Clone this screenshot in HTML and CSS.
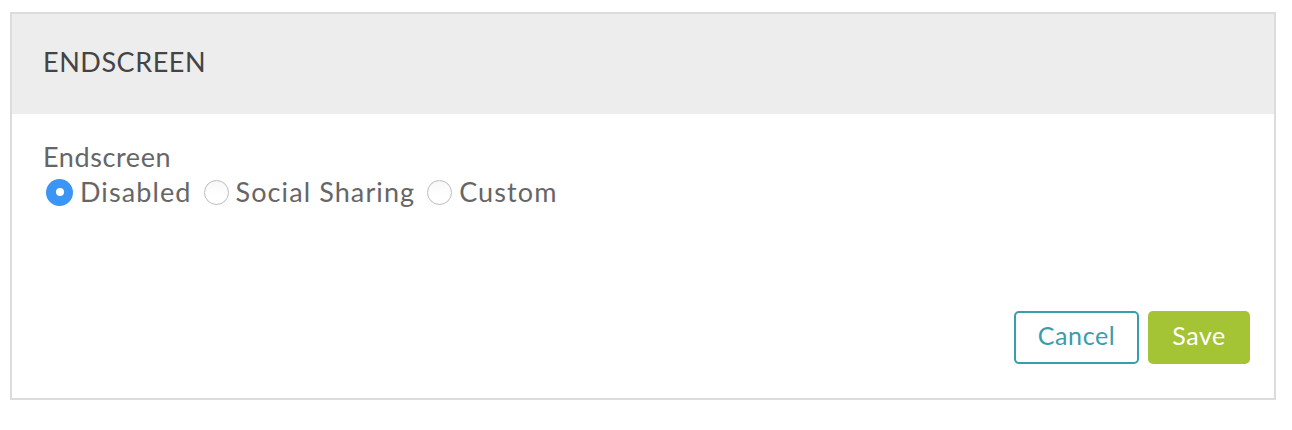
FILE: index.html
```html
<!DOCTYPE html>
<html>
<head>
<meta charset="utf-8">
<link rel="stylesheet" href="styles.css">
</head>
<body>
<div class="panel">
  <div class="panel-header">
    <h2 class="panel-title">ENDSCREEN</h2>
  </div>
  <div class="panel-body">
    <div class="field">
      <div class="field-label">Endscreen</div>
      <div class="radio-group">
        <label class="radio"><span class="radio-dot checked"></span><span class="radio-text">Disabled</span></label>
        <label class="radio"><span class="radio-dot"></span><span class="radio-text">Social Sharing</span></label>
        <label class="radio"><span class="radio-dot"></span><span class="radio-text">Custom</span></label>
      </div>
    </div>
    <div class="actions">
      <button class="btn btn-cancel">Cancel</button>
      <button class="btn btn-save">Save</button>
    </div>
  </div>
</div>
</body>
</html>
```
FILE: styles.css
```css
html, body {
  margin: 0;
  padding: 0;
  background: #ffffff;
}
body {
  padding: 12px 16px 0 10px;
  font-family: Lato, "Open Sans", sans-serif;
}
.panel {
  width: 1262px;
  border: 2px solid #dcdcdc;
  background: #fff;
}
.panel-header {
  height: 100px;
  background: #ededed;
  display: flex;
  align-items: center;
  padding-left: 31px;
  padding-bottom: 6px;
  box-sizing: border-box;
}
.panel-title {
  margin: 0;
  font-weight: 400;
  font-size: 27px;
  color: #444;
  letter-spacing: 0.55px;
}
.panel-body {
  height: 284px;
  display: flex;
  flex-direction: column;
  justify-content: space-between;
  padding: 26px 24px 34px 31px;
  box-sizing: border-box;
}
.field-label {
  font-size: 27px;
  line-height: 34px;
  color: #666;
  letter-spacing: 0.6px;
}
.radio-group {
  display: flex;
  align-items: center;
  gap: 11px;
  margin-top: 1px;
}
.radio {
  display: flex;
  align-items: center;
  gap: 7px;
  font-size: 27px;
  line-height: 34px;
  color: #666;
  letter-spacing: 1.1px;
}
.radio-dot {
  width: 23px;
  height: 23px;
  border-radius: 50%;
  border: 1px solid #bdbdbd;
  background: linear-gradient(#f7f7f7, #ffffff 60%);
  display: inline-flex;
  align-items: center;
  justify-content: center;
  margin-left: 1px;
}
.radio-dot.checked {
  width: 27px;
  height: 27px;
  margin-left: 3px;
  border: none;
  background: #3b95f5;
}
.radio-dot.checked::after {
  content: "";
  width: 8px;
  height: 8px;
  border-radius: 50%;
  background: #fff;
}
.actions {
  display: flex;
  justify-content: flex-end;
  gap: 9px;
}
.btn {
  height: 53px;
  font-family: Lato, "Open Sans", sans-serif;
  font-size: 25px;
  letter-spacing: 0.6px;
  border-radius: 5px;
  padding: 0 0 5px;
  cursor: pointer;
}
.btn-cancel {
  width: 125px;
  background: #fff;
  border: 2px solid #3a9dac;
  color: #3a9dac;
}
.btn-save {
  width: 102px;
  background: #a5c435;
  border: none;
  color: #fff;
}
```
